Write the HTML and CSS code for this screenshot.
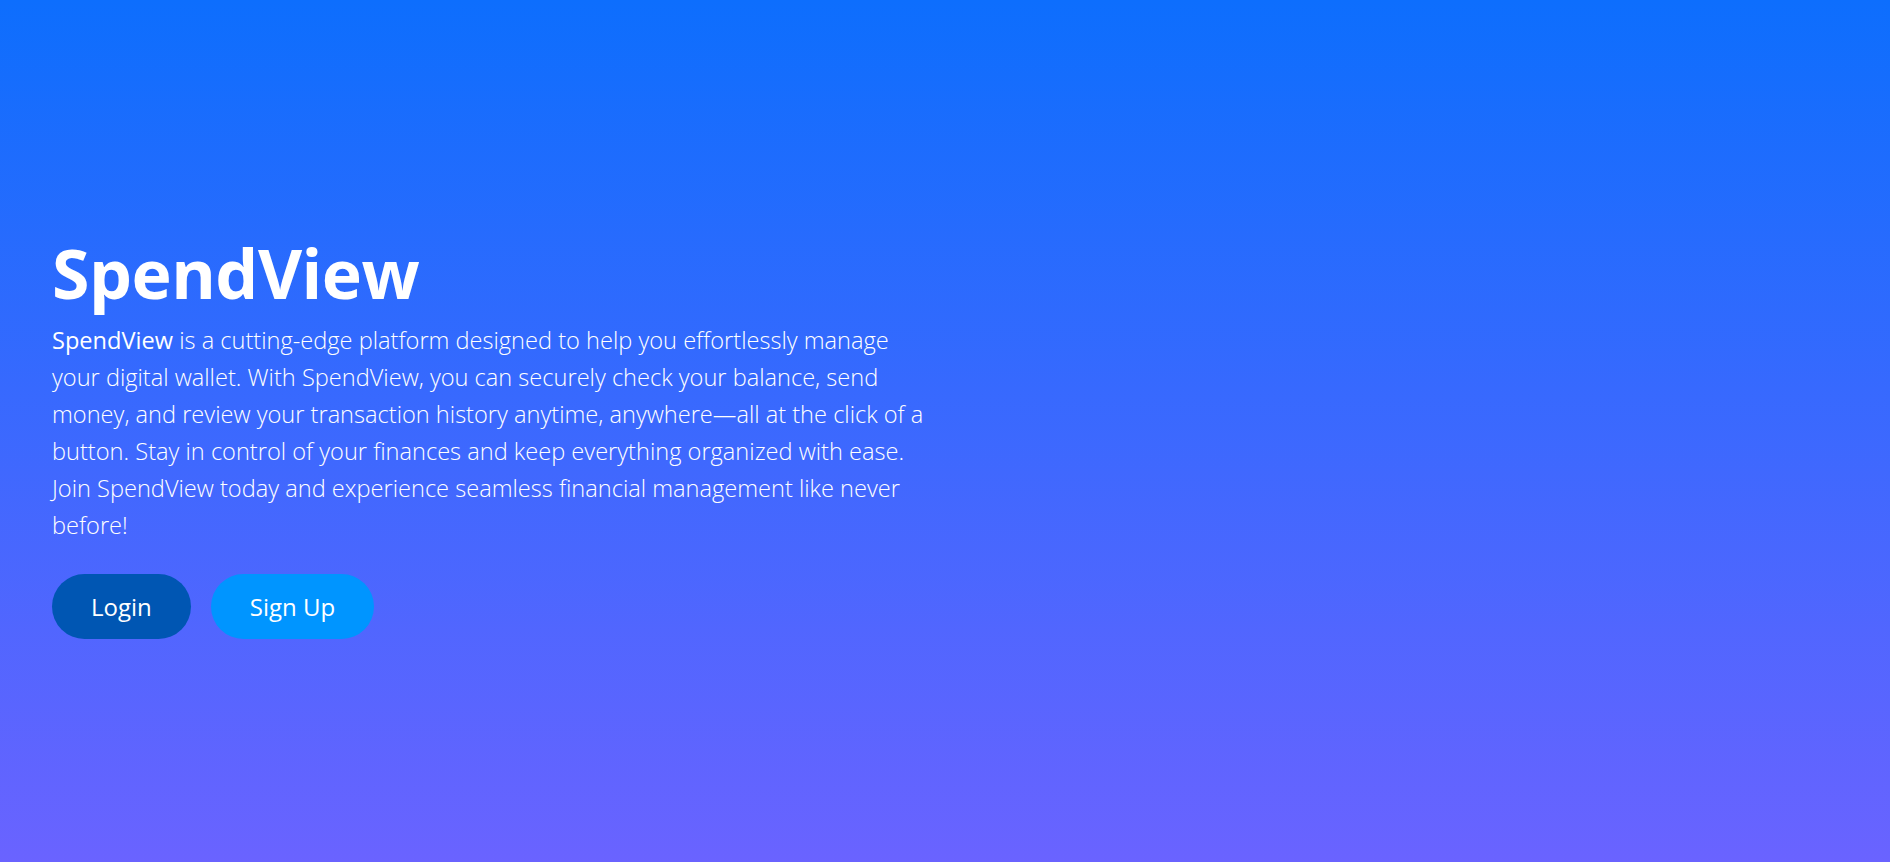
FILE: index.html
```html
<!DOCTYPE html>
<html lang="en">
<head>
<meta charset="utf-8">
<title>SpendView</title>
<link rel="stylesheet" href="styles.css">
</head>
<body>
<main class="hero">
  <section class="intro">
    <h1 class="title">SpendView</h1>
    <p class="lead"><strong>SpendView</strong> is a cutting-edge platform designed to help you effortlessly manage your digital wallet. With SpendView, you can securely check your balance, send money, and review your transaction history anytime, anywhere—all at the click of a button. Stay in control of your finances and keep everything organized with ease. Join SpendView today and experience seamless financial management like never before!</p>
    <div class="actions">
      <a class="btn btn-login" href="#">Login</a>
      <a class="btn btn-signup" href="#">Sign Up</a>
    </div>
  </section>
</main>
</body>
</html>
```

FILE: styles.css
```css
html, body {
  margin: 0;
  padding: 0;
}
body {
  font-family: "Open Sans", "Noto Sans", sans-serif;
  color: #fff;
  background: linear-gradient(to bottom, #0d6efd, #6a63ff);
  min-height: 100vh;
}
.hero {
  min-height: 100vh;
  display: flex;
  align-items: center;
  padding: 3px 52px 0;
  box-sizing: border-box;
}
.intro {
  width: 885px;
}
.title {
  font-size: 68px;
  font-weight: 700;
  line-height: 93px;
  margin: 0 0 3px;
  letter-spacing: -0.5px;
}
.lead {
  font-size: 23.6px;
  font-weight: 300;
  line-height: 37px;
  margin: 0 0 30px;
}
.lead strong {
  font-weight: 500;
}
.actions {
  display: flex;
  gap: 20px;
}
.btn {
  display: inline-flex;
  align-items: center;
  justify-content: center;
  height: 65px;
  padding: 0 39px;
  border-radius: 33px;
  color: #fff;
  text-decoration: none;
  font-size: 24px;
  font-weight: 400;
  box-sizing: border-box;
}
.btn-login {
  background: #0056b3;
}
.btn-signup {
  background: #0095ff;
}
```
